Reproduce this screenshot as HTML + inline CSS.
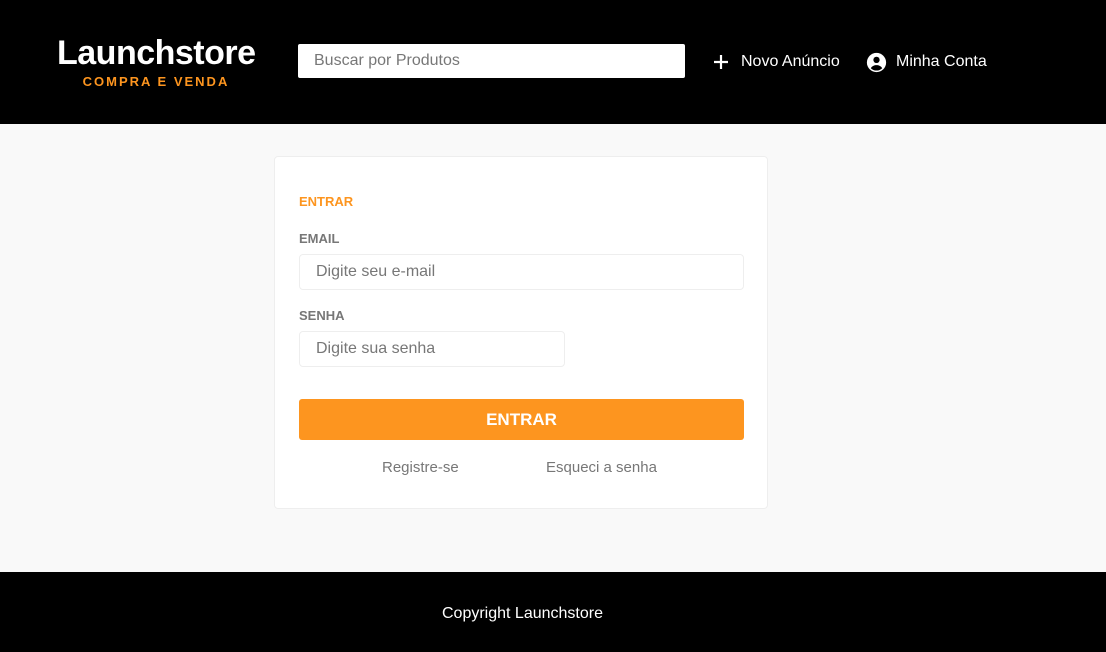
<!DOCTYPE html>
<html><head><meta charset="utf-8"><style>
*{box-sizing:border-box;margin:0;padding:0}
body{width:1106px;height:652px;background:#f9f9f9;font-family:"Liberation Sans",sans-serif;position:relative;overflow:hidden}
header{position:absolute;left:0;top:0;width:1106px;height:124px;background:#000}
.logo{position:absolute;left:57px;top:34px;width:198px;text-align:center}
.logo h1{color:#fff;font-size:34px;font-weight:bold;letter-spacing:-0.5px;line-height:38px}
.logo span{display:block;color:#fd951f;font-size:13px;font-weight:bold;letter-spacing:2px;margin-top:2px}
.search{position:absolute;left:298px;top:44px;width:387px;height:34px;background:#fff;border-radius:2px;color:#777;font-size:16px;line-height:34px;padding-left:16px}
.nav{position:absolute;top:52px;color:#fff;font-size:16px;display:flex;align-items:center;height:20px}
.card{position:absolute;left:274px;top:156px;width:494px;height:353px;background:#fff;border:1px solid #eee;border-radius:4px}
.t{position:absolute;left:24px;font-weight:bold;font-size:13px}
.inp{position:absolute;left:24px;height:36px;border:1px solid #eee;border-radius:4px;color:#777;font-size:16px;line-height:34px;padding-left:16px}
.btn{position:absolute;left:24px;top:242px;width:445px;height:41px;background:#fd951f;border-radius:3px;color:#fff;font-weight:bold;font-size:17px;text-align:center;line-height:41px}
.lnk{position:absolute;top:302px;color:#777;font-size:15px}
footer{position:absolute;left:0;top:572px;width:1106px;height:80px;background:#000;color:#fff;font-size:16px}
footer span{position:absolute;left:442px;top:33px}
</style></head><body>
<header>
<div class="logo"><h1>Launchstore</h1><span>COMPRA E VENDA</span></div>
<div class="search">Buscar por Produtos</div>
<div class="nav" style="left:712px"><svg width="18" height="18" viewBox="0 0 18 18" style="margin-right:11px"><path d="M9 2v14M2 9h14" stroke="#fff" stroke-width="2.2"/></svg>Novo Anúncio</div>
<div class="nav" style="left:866px"><svg width="21" height="21" viewBox="0 0 24 24" style="margin-right:9px"><circle cx="12" cy="12" r="11" fill="#fff"/><circle cx="12" cy="9" r="3.6" fill="#000"/><path d="M5.5 18.5c1.5-2.5 4-3.5 6.5-3.5s5 1 6.5 3.5c-1.8 1.8-4 2.7-6.5 2.7s-4.7-.9-6.5-2.7z" fill="#000"/></svg>Minha Conta</div>
</header>
<div class="card">
<div class="t" style="top:37px;color:#fd951f">ENTRAR</div>
<div class="t" style="top:74px;color:#777">EMAIL</div>
<div class="inp" style="top:97px;width:445px">Digite seu e-mail</div>
<div class="t" style="top:151px;color:#777">SENHA</div>
<div class="inp" style="top:174px;width:266px">Digite sua senha</div>
<div class="btn">ENTRAR</div>
<div class="lnk" style="left:107px">Registre-se</div>
<div class="lnk" style="left:271px">Esqueci a senha</div>
</div>
<footer><span>Copyright Launchstore</span></footer>
</body></html>
